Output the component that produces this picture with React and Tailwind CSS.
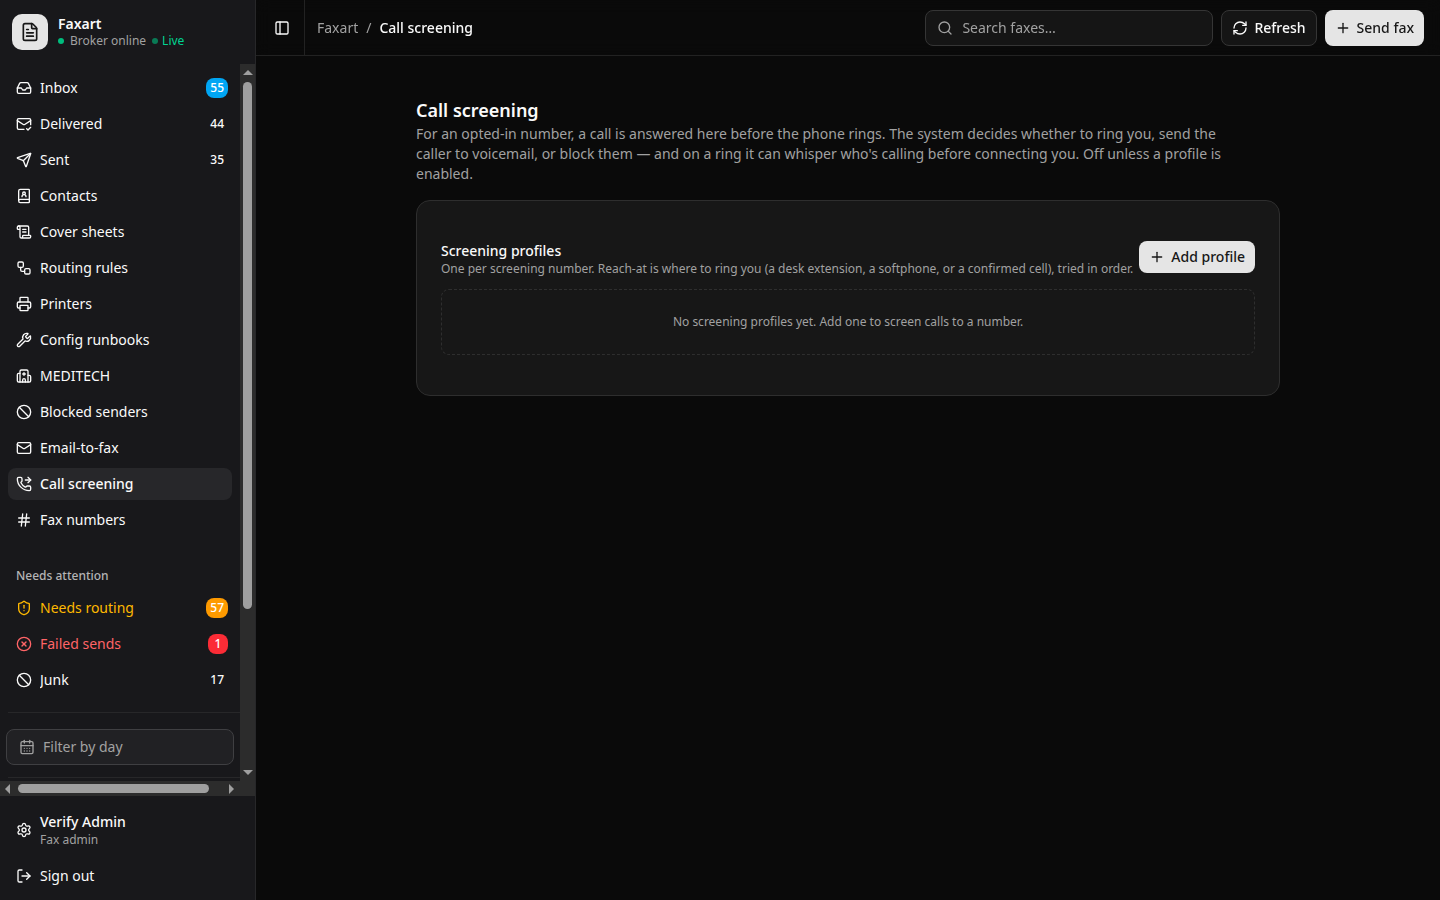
import React from 'react';
import {
  Ban,
  BookUser,
  CalendarDays,
  CircleX,
  FileText,
  Hash,
  Hospital,
  Inbox,
  LogOut,
  Mail,
  MailCheck,
  PanelLeft,
  PhoneForwarded,
  Plus,
  Printer,
  RefreshCw,
  ScrollText,
  Search,
  Send,
  Settings,
  ShieldAlert,
  Workflow,
  Wrench,
} from 'lucide-react';

const mainNav = [
  { label: 'Inbox', icon: Inbox, count: 55, badge: 'bg-[#00a6f4] text-white' },
  { label: 'Delivered', icon: MailCheck, count: 44 },
  { label: 'Sent', icon: Send, count: 35 },
  { label: 'Contacts', icon: BookUser },
  { label: 'Cover sheets', icon: ScrollText },
  { label: 'Routing rules', icon: Workflow },
  { label: 'Printers', icon: Printer },
  { label: 'Config runbooks', icon: Wrench },
  { label: 'MEDITECH', icon: Hospital },
  { label: 'Blocked senders', icon: Ban },
  { label: 'Email-to-fax', icon: Mail },
  { label: 'Call screening', icon: PhoneForwarded, active: true },
  { label: 'Fax numbers', icon: Hash },
];

const attentionNav = [
  { label: 'Needs routing', icon: ShieldAlert, count: 57, color: 'text-[#ffb900]', badge: 'bg-[#fe9a00] text-white' },
  { label: 'Failed sends', icon: CircleX, count: 1, color: 'text-[#ff6467]', badge: 'bg-[#fb2c36] text-white' },
  { label: 'Junk', icon: Ban, count: 17 },
];

const NavItem = ({ item }) => {
  const Icon = item.icon;
  return (
    <li>
      <a
        href="#"
        aria-current={item.active ? 'page' : undefined}
        className={`flex h-8 items-center gap-2 rounded-lg pl-2 pr-1 ${item.active ? 'bg-[#27272a] font-medium' : ''} ${item.color || ''}`}
      >
        <Icon className="size-4 shrink-0" />
        <span className="flex-1 truncate">{item.label}</span>
        {item.count !== undefined && (
          <span
            className={`flex h-5 min-w-5 items-center justify-center rounded-lg px-1 text-xs font-medium tabular-nums ${item.badge || 'text-[#fafafa]'}`}
          >
            {item.count}
          </span>
        )}
      </a>
    </li>
  );
};

// Arrow at the end of a scrollbar track
const ScrollArrow = ({ points, className }) => (
  <svg viewBox="0 0 10 10" className={`size-2.5 shrink-0 fill-[#9f9f9f] ${className}`} aria-hidden="true">
    <polygon points={points} />
  </svg>
);

const VerticalScrollbar = () => (
  <div className="flex w-[15px] shrink-0 flex-col items-center bg-[#2c2c2c] pb-[15px]">
    <ScrollArrow points="0,8 5,3 10,8" className="mt-[3px] mb-[5px]" />
    <div className="min-h-0 w-full flex-1 px-[3px]">
      <div className="h-[527px] max-h-full w-[9px] rounded-full bg-[#9f9f9f]" />
    </div>
    <ScrollArrow points="0,2 5,7 10,2" className="mt-[5px] mb-[3px]" />
  </div>
);

const HorizontalScrollbar = () => (
  <div className="flex h-[15px] shrink-0 items-center bg-[#2c2c2c]">
    <ScrollArrow points="8,0 3,5 8,10" className="ml-[2px] mr-[6px]" />
    <div className="min-w-0 flex-1">
      <div className="h-[9px] w-[191px] max-w-full rounded-full bg-[#9f9f9f]" />
    </div>
    <ScrollArrow points="2,0 7,5 2,10" className="ml-[5px] mr-[3px]" />
  </div>
);

const Sidebar = () => (
  <aside className="flex w-64 shrink-0 flex-col border-r border-[#272729] bg-[#18181b]">
    <div className="flex h-16 shrink-0 items-center gap-2.5 px-3">
      <div className="flex size-9 items-center justify-center rounded-[10px] bg-[#e5e5e5] text-[#171717]">
        <FileText className="size-5" />
      </div>
      <div>
        <div className="text-sm font-semibold leading-[18px]">Faxart</div>
        <div className="flex items-center gap-1.5 text-xs text-[#a1a1a1]">
          <span className="size-1.5 rounded-full bg-[#00bc7d]" />
          <span>Broker online</span>
          <span className="flex items-center gap-1 text-[#00d492]">
            <span className="size-1.5 rounded-full bg-[#00bc7d]/60" />
            Live
          </span>
        </div>
      </div>
    </div>

    <div className="flex min-h-0 flex-1">
      <div className="flex min-w-0 flex-1 flex-col">
        <div className="flex min-h-0 flex-1 flex-col gap-2 overflow-auto [scrollbar-width:none]">
          <nav className="p-2">
            <ul className="flex flex-col gap-1">
              {mainNav.map((item) => (
                <NavItem key={item.label} item={item} />
              ))}
            </ul>
          </nav>
          <nav className="p-2">
            <h2 className="flex h-8 items-center px-2 text-xs font-medium text-[#b4b4b5]">Needs attention</h2>
            <ul className="flex flex-col gap-1">
              {attentionNav.map((item) => (
                <NavItem key={item.label} item={item} />
              ))}
            </ul>
          </nav>
          <div className="mx-2 h-px w-full shrink-0 bg-[#272729]" />
          <div className="px-1.5 pt-2 pb-1">
            <button
              type="button"
              className="flex h-9 w-full items-center gap-2 rounded-lg border border-[#3f3f42] bg-[#212124] px-3 text-[#a1a1a1]"
            >
              <CalendarDays className="size-4" />
              Filter by day
            </button>
          </div>
          <div className="mx-2 mb-52 h-px w-full shrink-0 bg-[#272729]" />
        </div>
        <HorizontalScrollbar />
      </div>
      <VerticalScrollbar />
    </div>

    <div className="flex shrink-0 flex-col gap-1 p-2">
      <a href="#" className="flex items-center gap-2 rounded-lg p-2">
        <Settings className="size-4 shrink-0" />
        <span className="flex flex-col">
          <span className="font-medium">Verify Admin</span>
          <span className="text-xs text-[#a1a1a1]">Fax admin</span>
        </span>
      </a>
      <button type="button" className="flex h-8 items-center gap-2 rounded-lg px-2">
        <LogOut className="size-4 shrink-0" />
        Sign out
      </button>
    </div>
  </aside>
);

const TopBar = () => (
  <header className="sticky top-0 flex h-14 shrink-0 items-center border-b border-[#222222] bg-[#0a0a0a]/90 pr-4 backdrop-blur">
    <div className="flex h-full items-center border-r border-[#222222] pl-3 pr-2">
      <button type="button" aria-label="Toggle sidebar" className="flex size-7 items-center justify-center rounded-lg">
        <PanelLeft className="size-4" />
      </button>
    </div>
    <nav aria-label="Breadcrumb" className="flex flex-1 items-center gap-2 px-3">
      <a href="#" className="text-[#a1a1a1]">Faxart</a>
      <span className="text-[#a1a1a1]">/</span>
      <span className="font-medium">Call screening</span>
    </nav>
    <div className="flex items-center gap-2">
      <div className="relative">
        <Search className="absolute left-3 top-1/2 size-4 -translate-y-1/2 text-[#a1a1a1]" />
        <input
          type="search"
          aria-label="Search faxes"
          placeholder="Search faxes…"
          className="h-9 w-72 rounded-lg border border-[#353535] bg-[#151515] pl-9 pr-3 text-sm placeholder:text-[#a1a1a1]"
        />
      </div>
      <button
        type="button"
        className="flex h-9 items-center gap-1.5 rounded-lg border border-[#353535] bg-[#151515] px-2.5 font-medium"
      >
        <RefreshCw className="size-4" />
        Refresh
      </button>
      <button
        type="button"
        className="flex h-9 items-center gap-1.5 rounded-lg bg-[#e5e5e5] px-2.5 font-medium text-[#171717]"
      >
        <Plus className="size-4" />
        Send fax
      </button>
    </div>
  </header>
);

const App = () => {
  return (
    <div className="flex h-screen bg-[#0a0a0a] font-['Noto_Sans',sans-serif] text-sm text-[#fafafa]">
      <Sidebar />
      <div className="flex min-w-0 flex-1 flex-col">
        <TopBar />
        <main className="mx-auto w-full max-w-4xl px-4 py-10">
          <h1 className="text-lg font-semibold leading-7">Call screening</h1>
          <p className="max-w-[832px] text-[#a1a1a1]">
            For an opted-in number, a call is answered here before the phone rings. The system decides whether to ring
            you, send the caller to voicemail, or block them — and on a ring it can whisper who's calling before
            connecting you. Off unless a profile is enabled.
          </p>

          {/* Profiles card */}
          <section className="mt-4 rounded-[14px] border border-[#2e2e2e] bg-[#171717] px-6 py-10">
            <div className="flex items-start justify-between gap-1">
              <div>
                <h2 className="font-medium">Screening profiles</h2>
                <p className="text-xs text-[#a1a1a1]">
                  One per screening number. Reach-at is where to ring you (a desk extension, a softphone, or a
                  confirmed cell), tried in order.
                </p>
              </div>
              <button
                type="button"
                className="flex h-8 shrink-0 items-center gap-1.5 rounded-lg bg-[#e5e5e5] px-2.5 font-medium text-[#171717]"
              >
                <Plus className="size-4" />
                Add profile
              </button>
            </div>
            <div className="mt-3 rounded-lg border border-dashed border-[#2e2e2e] p-6 text-center text-xs text-[#a1a1a1]">
              No screening profiles yet. Add one to screen calls to a number.
            </div>
          </section>
        </main>
      </div>
    </div>
  );
};

export default App;
